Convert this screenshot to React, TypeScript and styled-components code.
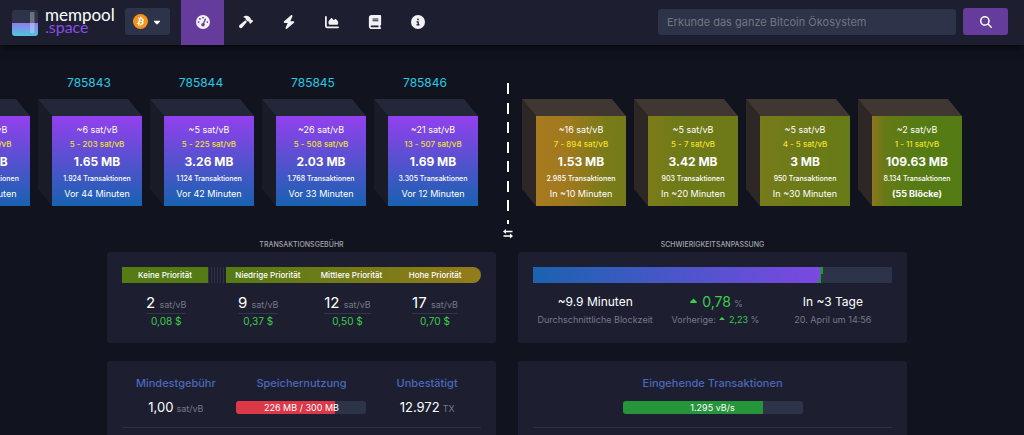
import React from "react";
import styled, { createGlobalStyle } from "styled-components";
import {
  FaGaugeHigh,
  FaHammer,
  FaBolt,
  FaChartArea,
  FaBook,
  FaCircleInfo,
  FaCaretUp,
  FaCaretDown,
  FaMagnifyingGlass,
} from "react-icons/fa6";

const colors = {
  page: "#11131f",
  panel: "#1d1f31",
  field: "#2d3348",
  purple: "#653b9c",
  green: "#3bcc49",
  muted: "#777986",
  title: "#4a68b9",
};

const GlobalStyle = createGlobalStyle`
  *, *::before, *::after { box-sizing: border-box; }
  body {
    margin: 0;
    background: ${colors.page};
    color: #fff;
    font-family: Inter, "Liberation Sans", sans-serif;
    font-size: 10px;
    line-height: 16px;
    overflow: hidden;
  }
  h2, h3, p, dl, dd, dt { margin: 0; font-weight: 400; }
  a { color: inherit; text-decoration: none; }
  button, input { font-family: inherit; border: 0; }
`;

const Page = styled.div`
  min-height: 100vh;
  display: flex;
  flex-direction: column;
`;

/* Header */

const Header = styled.header`
  display: flex;
  align-items: center;
  height: 45px;
  padding: 0 16px 0 12px;
  background: ${colors.panel};
  box-shadow: 0 0 11px 0 #000;
`;

const Brand = styled.a`
  display: flex;
  align-items: center;
  gap: 7px;
  width: 113px;
`;

const Wordmark = styled.span`
  display: flex;
  flex-direction: column;
  font-family: Lato, sans-serif;
  font-size: 17px;
  line-height: 12px;
  padding-bottom: 4px;
`;

const WordmarkAccent = styled.span`
  font-size: 16px;
  color: #8c4be8;
`;

const NetworkButton = styled.button`
  display: flex;
  align-items: center;
  justify-content: center;
  gap: 4px;
  width: 45px;
  height: 27px;
  margin-bottom: 2px;
  padding: 0;
  border-radius: 3px;
  background: ${colors.field};
  color: #fff;
  font-size: 10px;
`;

const Nav = styled.nav`
  display: flex;
  align-self: stretch;
  margin-left: 11px;
`;

const NavLink = styled.a<{ $active?: boolean }>`
  display: flex;
  align-items: center;
  justify-content: center;
  width: 43px;
  padding-bottom: 2px;
  font-size: 14px;
  color: #f2f2f4;
  background: ${(p) => (p.$active ? colors.purple : "transparent")};
`;

const Search = styled.form`
  display: flex;
  align-items: center;
  gap: 7px;
  margin: 0 0 2px auto;
`;

const SearchInput = styled.input`
  width: 298px;
  height: 26px;
  padding: 0 9px;
  border-radius: 3px;
  background: ${colors.field};
  color: #fff;
  font-size: 11px;
  &::placeholder { color: #6f7684; opacity: 1; }
`;

const SearchButton = styled.button`
  display: flex;
  align-items: center;
  justify-content: center;
  width: 45px;
  height: 27px;
  padding: 0;
  border-radius: 3px;
  background: ${colors.purple};
  color: #fff;
  font-size: 12px;
`;

/* Blockchain */

const Main = styled.main`
  flex: 1;
  display: flex;
  flex-direction: column;
  padding-right: 10px;
`;

const Blockchain = styled.section`
  display: grid;
  grid-template-columns: minmax(0, 1fr) 10px minmax(0, 1fr);
  padding-top: 29px;
`;

const Chain = styled.div<{ $side: "mined" | "pending" }>`
  display: flex;
  gap: 8px;
  justify-content: ${(p) => (p.$side === "mined" ? "flex-end" : "flex-start")};
  padding: ${(p) => (p.$side === "mined" ? "0 24px 0 0" : "0 0 0 10px")};
`;

const Block = styled.article`
  flex: none;
  width: 104px;
`;

const BlockHeight = styled.a`
  display: block;
  height: 25px;
  padding: 1px 2px 0 0;
  text-align: center;
  font-size: 12px;
  color: #22cce4;
`;

const Cube = styled.div`
  display: grid;
  grid-template-columns: 14px 90px;
  grid-template-rows: 17px 90px;
`;

const CubeSide = styled.div<{ $color: string }>`
  grid-area: 1 / 1 / 3 / 2;
  background: ${(p) => p.$color};
  clip-path: polygon(0 0, 100% 17px, 100% 100%, 0 calc(100% - 17px));
`;

const CubeTop = styled.div<{ $color: string }>`
  grid-area: 1 / 1 / 2 / 3;
  background: ${(p) => p.$color};
  clip-path: polygon(0 0, calc(100% - 14px) 0, 100% 100%, 14px 100%);
`;

const CubeFace = styled.div<{ $fill: string }>`
  grid-area: 2 / 2 / 3 / 3;
  padding-top: 7px;
  text-align: center;
  white-space: nowrap;
  background: ${(p) => p.$fill};
`;

const Rate = styled.p`
  font-size: 9px;
  line-height: 14px;
`;

const Span = styled.p`
  font-size: 8px;
  line-height: 14px;
  font-weight: 500;
  color: #f0e02c;
`;

const Size = styled.p`
  font-size: 12px;
  line-height: 22px;
  font-weight: 700;
`;

const Count = styled.p`
  font-size: 7px;
  line-height: 12px;
  font-weight: 500;
`;

const Age = styled.p<{ $bold?: boolean }>`
  font-size: 9px;
  line-height: 18px;
  font-weight: ${(p) => (p.$bold ? 700 : 400)};
`;

const Divider = styled.div`
  display: flex;
  flex-direction: column;
  align-items: center;
  gap: 5px;
  padding: 9px 0 0 1px;
`;

const DashedLine = styled.div`
  width: 2px;
  height: 141px;
  background: repeating-linear-gradient(
    to bottom,
    #fff 0 11px,
    transparent 11px 20px,
    #fff 20px 31px,
    transparent 31px 39px
  );
`;

/* Dashboard */

const Dashboard = styled.div`
  flex: 1;
  display: grid;
  grid-template-columns: minmax(0, 1fr) minmax(0, 1fr);
  grid-template-rows: auto 1fr;
  gap: 18px 22px;
  width: 100%;
  max-width: 800px;
  margin: 0 auto;
`;

const Panel = styled.section`
  display: flex;
  flex-direction: column;
`;

const PanelTitle = styled.h2`
  text-align: center;
  text-transform: uppercase;
  font-size: 7px;
  line-height: 12px;
  font-weight: 500;
  padding-bottom: 1px;
  color: #a3a4ad;
`;

const Card = styled.div<{ $open?: boolean }>`
  flex: 1;
  min-height: 74px;
  padding: ${(p) => (p.$open ? "15px 15px 0" : "15px")};
  border-radius: ${(p) => (p.$open ? "3px 3px 0 0" : "3px")};
  background: ${colors.panel};
`;

const PriorityBar = styled.div`
  display: flex;
  height: 16px;
  font-size: 8px;
  font-weight: 500;
  text-align: center;
  white-space: nowrap;
`;

const PriorityNone = styled.span`
  flex: 0 0 24%;
  background: #557b14;
`;

const PriorityGap = styled.span`
  flex: 0 0 5%;
  background: repeating-linear-gradient(to right, #2d3348 0 1px, ${colors.panel} 1px 3px);
`;

const PriorityScale = styled.span`
  flex: 1;
  display: grid;
  grid-template-columns: repeat(3, 1fr);
  padding-right: 4px;
  border-radius: 0 8px 8px 0;
  background: linear-gradient(to right, #557b14, #757b18 50%, #957b1b);
`;

const FeeGrid = styled.div`
  display: grid;
  grid-template-columns: 49fr 53fr 46fr 51fr;
  justify-items: center;
  padding-top: 9px;
`;

const Fee = styled.p`
  height: 22px;
  line-height: 21px;
  font-size: 15px;
  border-bottom: 1px solid #33364a;
`;

const Dollars = styled.p`
  text-align: center;
  line-height: 14px;
  color: ${colors.green};
`;

const Unit = styled.small`
  font-size: 9px;
  color: ${colors.muted};
`;

const EpochBar = styled.div`
  display: flex;
  height: 16px;
  background: ${colors.field};
`;

const EpochDone = styled.div`
  background: linear-gradient(to right, #1a63b0, #7c48e2);
`;

const EpochMark = styled.svg`
  flex: none;
  margin-left: -2px;
`;

const EpochGrid = styled.div`
  display: grid;
  grid-template-columns: 124fr 116fr 118fr;
  padding-top: 8px;
  text-align: center;
  white-space: nowrap;
`;

const EpochValue = styled.p<{ $up?: boolean }>`
  display: flex;
  align-items: baseline;
  justify-content: center;
  gap: 3px;
  height: 21px;
  font-size: ${(p) => (p.$up ? "14px" : "12px")};
  line-height: 21px;
  color: ${(p) => (p.$up ? colors.green : "#fff")};
`;

const EpochNote = styled.p`
  height: 16px;
  font-size: 9px;
  color: ${colors.muted};
`;

const Up = styled.span`
  color: ${colors.green};
`;

const StatGrid = styled.dl<{ $single?: boolean }>`
  display: grid;
  grid-template-columns: ${(p) => (p.$single ? "1fr" : "3fr 4fr 3fr")};
  justify-items: center;
  padding-bottom: 10px;
  border-bottom: 1px solid #2d3042;
`;

const Stat = styled.div`
  display: flex;
  flex-direction: column;
  align-items: center;
`;

const StatTitle = styled.dt`
  font-size: 11px;
  line-height: 14px;
  font-weight: 500;
  color: ${colors.title};
`;

const StatValue = styled.dd`
  display: flex;
  align-items: baseline;
  justify-content: center;
  height: 20px;
  margin-top: 7px;
  font-size: 13px;
  line-height: 20px;
  gap: 3px;
`;

const Meter = styled.div<{ $width: string; $color: string; $level: string }>`
  align-self: center;
  width: ${(p) => p.$width};
  height: 13px;
  border-radius: 3px;
  font-size: 9px;
  line-height: 13px;
  text-align: center;
  background: linear-gradient(to right, ${(p) => p.$color} ${(p) => p.$level}, ${colors.field} ${(p) => p.$level});
`;

const LogoMark = () => (
  <svg width="26" height="26" viewBox="0 0 26 26" aria-hidden="true">
    <defs>
      <linearGradient id="pool" x1="0" y1="0" x2="0" y2="1">
        <stop offset="0" stopColor="#8f7bef" />
        <stop offset="1" stopColor="#4fc6dc" />
      </linearGradient>
      <clipPath id="tile">
        <rect width="26" height="26" rx="3" />
      </clipPath>
    </defs>
    <g clipPath="url(#tile)">
      <rect width="26" height="26" fill="#2d3348" />
      <rect y="13" width="26" height="13" fill="url(#pool)" />
      <rect x="18" y="2" width="4.500" height="21" rx="1" fill="#fff" opacity="0.3" />
    </g>
  </svg>
);

const BitcoinMark = () => (
  <svg width="15" height="15" viewBox="0 0 64 64" aria-hidden="true">
    <circle cx="32" cy="32" r="32" fill="#f7931a" />
    <path
      fill="#fff"
      d="M46.1 27.4c.6-4.3-2.6-6.5-7-8l1.4-5.7-3.5-.9-1.4 5.500-2.800-.7 1.400-5.600-3.500-.9-1.400 5.700-2.200-.5-4.800-1.200-.9 3.700s2.600.6 2.500.6c1.400.4 1.700 1.300 1.600 2l-1.600 6.600-2.300 9.200c-.2.4-.6 1.100-1.600.8 0 .1-2.500-.6-2.500-.6l-1.700 4 4.500 1.100 2.500.6-1.400 5.800 3.400.9 1.400-5.700 2.800.7-1.400 5.700 3.500.9 1.400-5.800c5.900 1.100 10.400.7 12.200-4.700 1.500-4.300-.1-6.800-3.200-8.400 2.300-.5 4-2 4.500-5.200zm-8 11.200c-1.100 4.300-8.300 2-10.600 1.400l1.900-7.600c2.300.6 9.800 1.700 8.700 6.200zm1.100-11.300c-1 3.900-7 1.900-8.900 1.400l1.700-6.900c2 .5 8.200 1.400 7.200 5.500z"
    />
  </svg>
);

const SwapArrows = () => (
  <svg width="10" height="10" viewBox="0 0 10 10" fill="#fff" aria-hidden="true">
    <path d="M0 2.500 3 0V1.800H9.500V3.200H3V5zM10 7 7 4.500V6.300H0.500V7.700H7V9.500z" />
  </svg>
);

const nav = [
  { label: "Dashboard", icon: <FaGaugeHigh />, active: true },
  { label: "Mining", icon: <FaHammer /> },
  { label: "Lightning", icon: <FaBolt /> },
  { label: "Graphs", icon: <FaChartArea /> },
  { label: "Docs", icon: <FaBook /> },
  { label: "About", icon: <FaCircleInfo /> },
];

type BlockData = {
  height?: string;
  rate: string;
  span: string;
  size: string;
  count: string;
  age: string;
  fill?: string;
  bold?: boolean;
};

const mined: BlockData[] = [
  { height: "785842", rate: "~12 sat/vB", span: "5 - 301 sat/vB", size: "1.72 MB", count: "2.410 Transaktionen", age: "Vor 51 Minuten" },
  { height: "785843", rate: "~6 sat/vB", span: "5 - 203 sat/vB", size: "1.65 MB", count: "1.924 Transaktionen", age: "Vor 44 Minuten" },
  { height: "785844", rate: "~5 sat/vB", span: "5 - 225 sat/vB", size: "3.26 MB", count: "1.124 Transaktionen", age: "Vor 42 Minuten" },
  { height: "785845", rate: "~26 sat/vB", span: "5 - 508 sat/vB", size: "2.03 MB", count: "1.768 Transaktionen", age: "Vor 33 Minuten" },
  { height: "785846", rate: "~21 sat/vB", span: "13 - 507 sat/vB", size: "1.69 MB", count: "3.305 Transaktionen", age: "Vor 12 Minuten" },
];

const pending: BlockData[] = [
  { rate: "~16 sat/vB", span: "7 - 894 sat/vB", size: "1.53 MB", count: "2.985 Transaktionen", age: "In ~10 Minuten", fill: "linear-gradient(to right, #a87a1f, #a0791f 35%, #787b1a 80%, #747b19)" },
  { rate: "~5 sat/vB", span: "5 - 7 sat/vB", size: "3.42 MB", count: "903 Transaktionen", age: "In ~20 Minuten", fill: "linear-gradient(to right, #7c7b19, #6e7a18 40%, #6e7a18)" },
  { rate: "~5 sat/vB", span: "4 - 5 sat/vB", size: "3 MB", count: "950 Transaktionen", age: "In ~30 Minuten", fill: "linear-gradient(to right, #777b1a, #6c7a18 50%, #667b17)" },
  { rate: "~2 sat/vB", span: "1 - 11 sat/vB", size: "109.63 MB", count: "8.134 Transaktionen", age: "(55 Blöcke)", bold: true, fill: "linear-gradient(to right, #8f761c, #667a17 14%, #557b14 50%, #557b14)" },
];

const minedFill = "linear-gradient(to bottom, #9340ee, #1862b0)";

const BlockView = ({ block }: { block: BlockData }) => {
  const isMined = Boolean(block.height);
  return (
    <Block>
      {isMined ? <BlockHeight href="#block">{block.height}</BlockHeight> : <BlockHeight as="div" />}
      <Cube>
        <CubeSide $color={isMined ? "#191c27" : "#2d2825"} />
        <CubeTop $color={isMined ? "#232838" : "#403733"} />
        <CubeFace $fill={block.fill ?? minedFill}>
          <Rate>{block.rate}</Rate>
          <Span>{block.span}</Span>
          <Size>{block.size}</Size>
          <Count>{block.count}</Count>
          <Age $bold={block.bold}>{block.age}</Age>
        </CubeFace>
      </Cube>
    </Block>
  );
};

const fees = [
  ["2", "0,08 $"],
  ["9", "0,37 $"],
  ["12", "0,50 $"],
  ["17", "0,70 $"],
];

export default function App() {
  return (
    <Page>
      <GlobalStyle />
      <Header>
        <Brand href="#home">
          <LogoMark />
          <Wordmark>
            <span>mempool</span>
            <WordmarkAccent>.space</WordmarkAccent>
          </Wordmark>
        </Brand>
        <NetworkButton type="button" aria-label="Bitcoin">
          <BitcoinMark />
          <FaCaretDown />
        </NetworkButton>
        <Nav>
          {nav.map((item) => (
            <NavLink key={item.label} href="#nav" aria-label={item.label} $active={item.active}>
              {item.icon}
            </NavLink>
          ))}
        </Nav>
        <Search>
          <SearchInput type="text" aria-label="Suche" placeholder="Erkunde das ganze Bitcoin Ökosystem" />
          <SearchButton type="button" aria-label="Suchen">
            <FaMagnifyingGlass />
          </SearchButton>
        </Search>
      </Header>

      <Main>
        <Blockchain>
          <Chain $side="mined">
            {mined.map((b) => (
              <BlockView key={b.height} block={b} />
            ))}
          </Chain>
          <Divider>
            <DashedLine />
            <SwapArrows />
          </Divider>
          <Chain $side="pending">
            {pending.map((b) => (
              <BlockView key={b.age} block={b} />
            ))}
          </Chain>
        </Blockchain>

        <Dashboard>
          <Panel>
            <PanelTitle>Transaktionsgebühr</PanelTitle>
            <Card>
              <PriorityBar>
                <PriorityNone>Keine Priorität</PriorityNone>
                <PriorityGap />
                <PriorityScale>
                  <span>Niedrige Priorität</span>
                  <span>Mittlere Priorität</span>
                  <span>Hohe Priorität</span>
                </PriorityScale>
              </PriorityBar>
              <FeeGrid>
                {fees.map(([rate, usd]) => (
                  <div key={rate}>
                    <Fee>
                      {rate} <Unit>sat/vB</Unit>
                    </Fee>
                    <Dollars>{usd}</Dollars>
                  </div>
                ))}
              </FeeGrid>
            </Card>
          </Panel>

          <Panel>
            <PanelTitle>Schwierigkeitsanpassung</PanelTitle>
            <Card>
              <EpochBar>
                <EpochDone style={{ width: "80%" }} />
                <EpochMark width="5" height="16" viewBox="0 0 5 16" fill="#25943b" aria-hidden="true">
                  <path d="M2 0H5V7H3V16H0V12H2z" />
                </EpochMark>
              </EpochBar>
              <EpochGrid>
                <div>
                  <EpochValue>~9.9 Minuten</EpochValue>
                  <EpochNote>Durchschnittliche Blockzeit</EpochNote>
                </div>
                <div>
                  <EpochValue $up>
                    <FaCaretUp size={11} />
                    0,78 <Unit>%</Unit>
                  </EpochValue>
                  <EpochNote>
                    Vorherige:{" "}
                    <Up>
                      <FaCaretUp size={8} /> 2,23
                    </Up>{" "}
                    %
                  </EpochNote>
                </div>
                <div>
                  <EpochValue>In ~3 Tage</EpochValue>
                  <EpochNote>20. April um 14:56</EpochNote>
                </div>
              </EpochGrid>
            </Card>
          </Panel>

          <Card $open>
            <StatGrid>
              <Stat>
                <StatTitle>Mindestgebühr</StatTitle>
                <StatValue>
                  1,00 <Unit>sat/vB</Unit>
                </StatValue>
              </Stat>
              <Stat>
                <StatTitle>Speichernutzung</StatTitle>
                <StatValue>
                  <Meter $width="130px" $color="#dc3848" $level="76%">
                    226 MB / 300 MB
                  </Meter>
                </StatValue>
              </Stat>
              <Stat>
                <StatTitle>Unbestätigt</StatTitle>
                <StatValue>
                  12.972 <Unit>TX</Unit>
                </StatValue>
              </Stat>
            </StatGrid>
          </Card>

          <Card $open>
            <StatGrid $single>
              <Stat>
                <StatTitle>Eingehende Transaktionen</StatTitle>
                <StatValue>
                  <Meter $width="180px" $color="#25943b" $level="78%">
                    1.295 vB/s
                  </Meter>
                </StatValue>
              </Stat>
            </StatGrid>
          </Card>
        </Dashboard>
      </Main>
    </Page>
  );
}
